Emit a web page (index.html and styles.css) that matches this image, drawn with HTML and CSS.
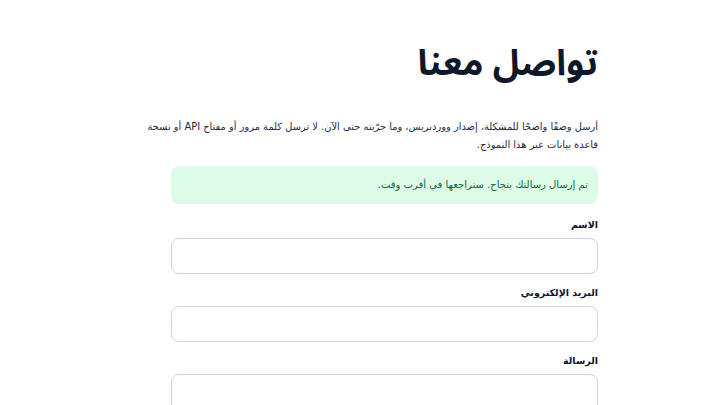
FILE: index.html
```html
<!DOCTYPE html>
<html lang="ar" dir="rtl">
<head>
<meta charset="utf-8">
<title>تواصل معنا</title>
<link rel="stylesheet" href="styles.css">
</head>
<body>
<main class="page">
  <h1 class="title">تواصل معنا</h1>
  <p class="intro">أرسل وصفًا واضحًا للمشكلة، إصدار ووردبريس، وما جرّبته حتى الآن. لا ترسل كلمة مرور أو مفتاح API أو نسخة قاعدة بيانات عبر هذا النموذج.</p>
  <form class="form">
    <div class="alert">تم إرسال رسالتك بنجاح. سنراجعها في أقرب وقت.</div>
    <div class="field">
      <label class="label" for="name">الاسم</label>
      <input class="input" id="name" type="text">
    </div>
    <div class="field">
      <label class="label" for="email">البريد الإلكتروني</label>
      <input class="input" id="email" type="email">
    </div>
    <div class="field">
      <label class="label" for="msg">الرسالة</label>
      <textarea class="input textarea" id="msg"></textarea>
    </div>
  </form>
</main>
</body>
</html>
```

FILE: styles.css
```css
* { box-sizing: border-box; }
html, body { margin: 0; background: #ffffff; }
body {
  font-family: "DejaVu Sans", sans-serif;
  color: #0f172a;
}
.page {
  width: 458px;
  margin-right: 122px;
  margin-left: auto;
  padding-top: 40px;
}
.title {
  margin: 0 0 30px;
  font-family: "Noto Sans Arabic", system-ui, sans-serif;
  font-size: 36px;
  line-height: 48px;
  font-weight: 700;
  color: #0f172a;
}
.intro {
  margin: 0 0 12px;
  font-size: 9.9px;
  line-height: 18px;
  color: #1e293b;
}
.form {
  width: 427px;
  display: flex;
  flex-direction: column;
  gap: 12px;
}
.alert {
  margin-bottom: 2px;
  background: #dcfce7;
  color: #166534;
  border-radius: 8px;
  padding: 12px 10px;
  font-size: 10px;
  line-height: 14px;
}
.field {
  display: flex;
  flex-direction: column;
  gap: 6px;
}
.label {
  font-size: 9.5px;
  font-weight: 700;
  line-height: 14px;
  color: #0f172a;
}
.input {
  display: block;
  width: 100%;
  height: 36px;
  border: 1px solid #cbd5e1;
  border-radius: 8px;
  background: #fff;
  font: inherit;
}
.textarea {
  height: 100px;
  resize: none;
}
```
